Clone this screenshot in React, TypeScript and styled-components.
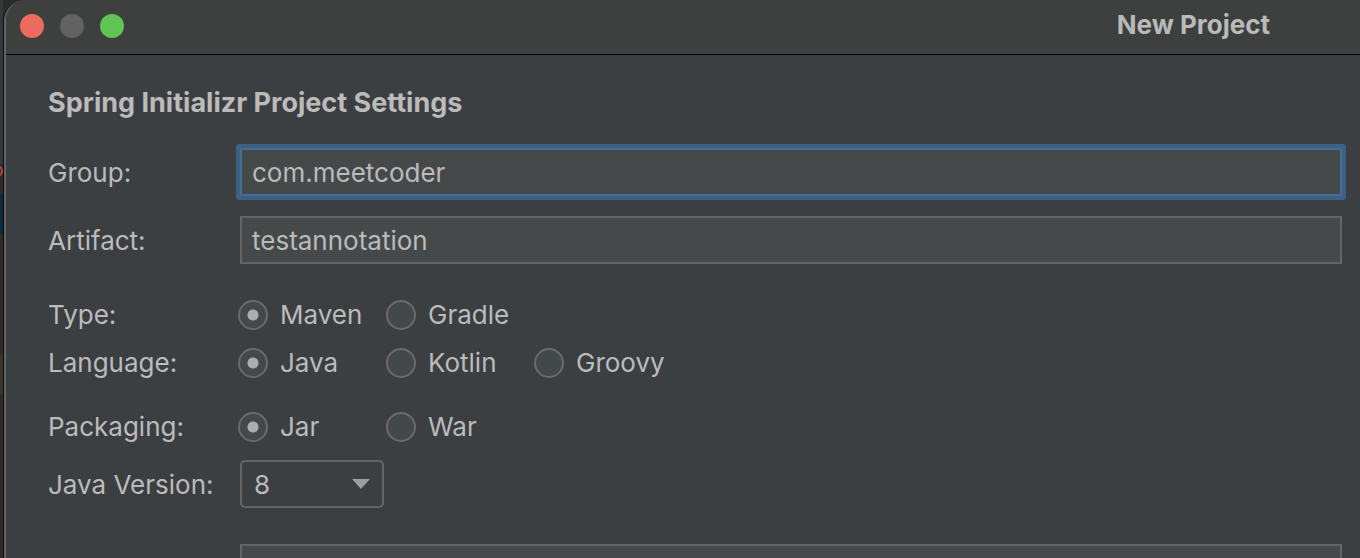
import React from "react";
import styled, { createGlobalStyle } from "styled-components";

const Global = createGlobalStyle`
  *, *::before, *::after { box-sizing: border-box; }
  body {
    margin: 0;
    background: #2b2b2b;
    color: #bbbbbb;
    font-family: Inter, "Liberation Sans", sans-serif;
    font-size: 26px;
    line-height: 32px;
    -webkit-font-smoothing: antialiased;
  }
  input, select, button { font: inherit; color: inherit; }
`;

const Desktop = styled.div`
  display: flex;
  height: 100vh;
  overflow: hidden;
`;

const Backdrop = styled.div`
  flex: none;
  width: 3px;
  margin-right: -3px;
  overflow: hidden;
  background: #2b2b2b;
`;

const Strip = styled.div<{ $height: number; $color?: string }>`
  height: ${(p) => p.$height}px;
  background: ${(p) => p.$color ?? "transparent"};
`;

const Edge = styled.svg`
  display: block;
`;

const Outline = styled.div`
  flex: 1;
  min-width: 0;
  margin-left: 3px;
  padding-left: 1px;
  background: #0c0c0c;
  border-top-left-radius: 22px;
`;

const Window = styled.main`
  height: 100%;
  border-left: 2px solid #626466;
  border-top-left-radius: 21px;
  background: #3c3f41;
  overflow: hidden;
`;

const TitleBar = styled.header`
  display: flex;
  align-items: center;
  justify-content: space-between;
  height: 55px;
  padding: 0 90px 3px 14px;
  background: #3e403f;
  border-bottom: 1px solid #050505;
`;

const Lights = styled.div`
  display: flex;
  gap: 16px;
`;

const Light = styled.button<{ $color: string }>`
  width: 24px;
  height: 24px;
  padding: 0;
  border: 0;
  border-radius: 50%;
  background: ${(p) => p.$color};
`;

const Title = styled.h1`
  margin: 0;
  padding-bottom: 2px;
  font-size: 26px;
  line-height: 32px;
  font-weight: 700;
  color: #b9baba;
`;

const Form = styled.form`
  padding: 32px 16px 0 42px;
`;

const Heading = styled.h2`
  margin: 0 0 29px;
  font-size: 27px;
  line-height: 32px;
  font-weight: 700;
`;

const Row = styled.div<{ $gap: number }>`
  display: grid;
  grid-template-columns: 190px minmax(0, 1fr);
  align-items: center;
  margin-bottom: ${(p) => p.$gap}px;
`;

const Label = styled.label`
  padding-top: 2px;
`;

const Field = styled.input<{ $active?: boolean }>`
  grid-column: 2;
  min-width: 0;
  height: 48px;
  margin: 0 2px;
  padding: 0 10px;
  border: 2px solid ${(p) => (p.$active ? "#466d94" : "#646464")};
  border-radius: ${(p) => (p.$active ? "1px" : "0")};
  outline: 0;
  background: #45494a;
  box-shadow: ${(p) => (p.$active ? "0 0 0 4px #3d6185" : "none")};
`;

const Options = styled.div`
  display: grid;
  grid-template-columns: repeat(3, 148px);
`;

const Option = styled.label`
  display: flex;
  align-items: center;
  gap: 12px;
  height: 30px;
`;

const Radio = styled.input`
  appearance: none;
  flex: none;
  width: 30px;
  height: 30px;
  margin: 0;
  border: 2px solid #6b6b6b;
  border-radius: 50%;
  background: #43494a;
  &:checked {
    background: radial-gradient(circle, #adadad 0 5px, #43494a 6px);
  }
`;

const SelectBox = styled.div`
  display: flex;
  align-items: center;
  width: 144px;
  margin-left: 2px;
`;

const Select = styled.select`
  appearance: none;
  width: 144px;
  height: 48px;
  padding: 2px 12px 0;
  border: 2px solid #646464;
  border-radius: 5px;
  outline: 0;
  background: #3c3f41;
`;

const Arrow = styled.svg`
  flex: none;
  margin-left: -32px;
  pointer-events: none;
`;

type Choice = { label: string; name: string; values: string[]; gap: number };

const choices: Choice[] = [
  { label: "Type:", name: "type", values: ["Maven", "Gradle"], gap: 16 },
  { label: "Language:", name: "language", values: ["Java", "Kotlin", "Groovy"], gap: 32 },
  { label: "Packaging:", name: "packaging", values: ["Jar", "War"], gap: 17 },
];

function RadioRow({ label, name, values, gap }: Choice) {
  return (
    <Row $gap={gap} role="radiogroup" aria-labelledby={name}>
      <span id={name}>{label}</span>
      <Options>
        {values.map((value, i) => (
          <Option key={value}>
            <Radio type="radio" name={name} value={value} defaultChecked={i === 0} />
            {value}
          </Option>
        ))}
      </Options>
    </Row>
  );
}

export default function App() {
  return (
    <>
      <Global />
      <Desktop>
        <Backdrop aria-hidden="true">
          <Strip $height={164} $color="#35383a" />
          <Edge width="3" height="14" viewBox="0 0 3 14">
            <circle cx="-3" cy="7" r="5" fill="none" stroke="#b04a40" strokeWidth="2" />
          </Edge>
          <Strip $height={16} />
          <Strip $height={40} $color="#10283c" />
          <Strip $height={120} />
          <Strip $height={40} $color="#3a3529" />
        </Backdrop>
        <Outline>
          <Window>
            <TitleBar>
              <Lights>
                <Light type="button" aria-label="Close" $color="#ed6a5e" />
                <Light type="button" aria-label="Minimize" $color="#616261" disabled />
                <Light type="button" aria-label="Zoom" $color="#61c554" />
              </Lights>
              <Title>New Project</Title>
            </TitleBar>
            <Form onSubmit={(e) => e.preventDefault()}>
              <Heading>Spring Initializr Project Settings</Heading>
              <Row $gap={20}>
                <Label htmlFor="group">Group:</Label>
                <Field id="group" $active defaultValue="com.meetcoder" />
              </Row>
              <Row $gap={35}>
                <Label htmlFor="artifact">Artifact:</Label>
                <Field id="artifact" defaultValue="testannotation" />
              </Row>
              {choices.map((c) => (
                <RadioRow key={c.name} {...c} />
              ))}
              <Row $gap={36}>
                <Label htmlFor="java-version">Java Version:</Label>
                <SelectBox>
                  <Select id="java-version" defaultValue="8">
                    <option>8</option>
                    <option>11</option>
                  </Select>
                  <Arrow width="18" height="10" viewBox="0 0 18 10" aria-hidden="true">
                    <path d="M0 0H18L9 10Z" fill="#9a9da1" />
                  </Arrow>
                </SelectBox>
              </Row>
              <Row $gap={0}>
                <Field aria-label="Version" />
              </Row>
            </Form>
          </Window>
        </Outline>
      </Desktop>
    </>
  );
}
